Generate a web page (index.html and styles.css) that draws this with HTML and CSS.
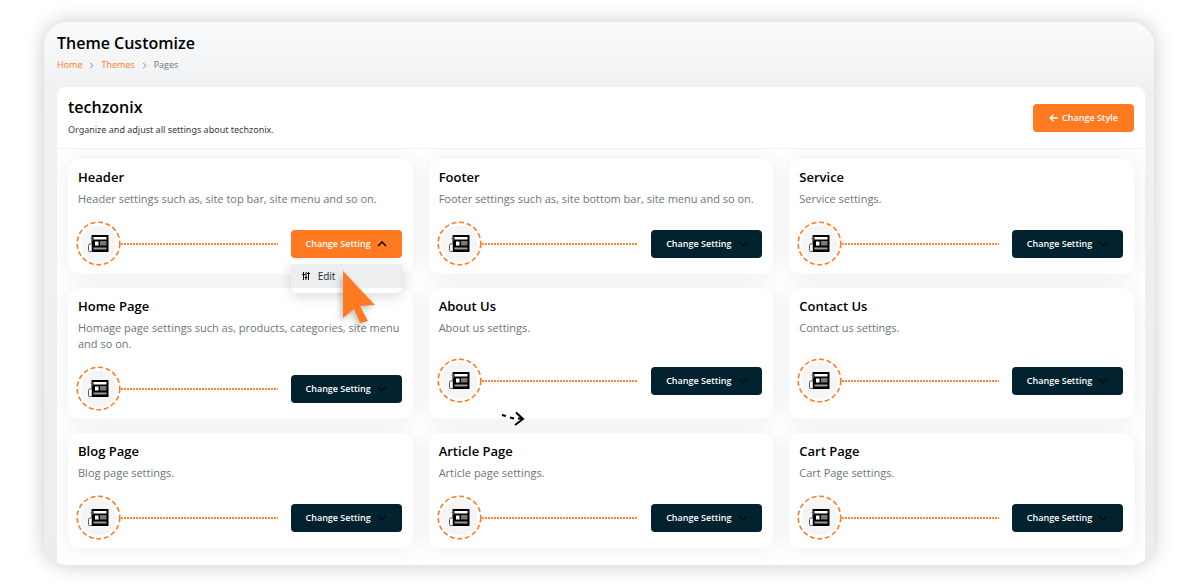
FILE: index.html
```html
<!DOCTYPE html>
<html lang="en">
<head>
    <meta charset="UTF-8">
    <meta name="viewport" content="width=device-width, initial-scale=1.0">
    <title>Theme Customize</title>
    <link rel="stylesheet" href="styles.css">
</head>
<body>
    <!-- Shared icons -->
    <svg class="sprite" aria-hidden="true">
        <symbol id="icon-news" viewBox="0 0 45 45">
            <circle cx="22.500" cy="22.500" r="18" fill="#f5f5f5"/>
            <circle cx="22.500" cy="22.500" r="21.300" fill="none" stroke="#ff7a21" stroke-width="1.600" stroke-dasharray="4.900 2.740"/>
            <g transform="translate(11.500 14)">
                <rect x="4" y="0" width="17" height="17" rx="0.500" fill="#000"/>
                <path d="M6 2h13v2.500H6zM7.500 6.500h3.500v4H7.500z" fill="#fff"/>
                <path d="M12.500 6h6.500v4.500h-6.500z" fill="#777"/>
                <path d="M6 12.500h13v2H6z" fill="#999"/>
                <path d="M4 9H2.500Q1 9 1 10.500v5Q1 16.500 2.500 16.500H4" fill="#fff" stroke="#444" stroke-width="0.900"/>
                <path d="M3 3.500h2M5 2v4" stroke="#555" stroke-width="0.800"/>
            </g>
        </symbol>
        <symbol id="icon-chevron" viewBox="0 0 10 8">
            <path d="M1 2l4 4 4-4" fill="none" stroke="currentColor" stroke-width="1.500"/>
        </symbol>
    </svg>

    <div class="window">
        <header class="page-header">
            <h1>Theme Customize</h1>
            <nav class="breadcrumb" aria-label="Breadcrumb">
                <a href="#">Home</a>
                <svg class="separator" viewBox="0 0 5 8"><path d="M1 1l3 3-3 3"/></svg>
                <a href="#">Themes</a>
                <svg class="separator" viewBox="0 0 5 8"><path d="M1 1l3 3-3 3"/></svg>
                <span>Pages</span>
            </nav>
        </header>

        <main class="panel">
            <div class="panel-header">
                <div>
                    <h2>techzonix</h2>
                    <p>Organize and adjust all settings about techzonix.</p>
                </div>
                <button class="btn btn-style" type="button">
                    <svg class="arrow" viewBox="0 0 9 8"><path d="M9 4H1.500M4.500 0.800L1.200 4l3.300 3.200"/></svg>
                    Change Style
                </button>
            </div>

            <div class="cards">
                <section class="card">
                    <h3>Header</h3>
                    <p>Header settings such as, site top bar, site menu and so on.</p>
                    <div class="card-action">
                        <svg class="badge"><use href="#icon-news"/></svg>
                        <span class="line"></span>
                        <div class="dropdown">
                            <button class="btn open" type="button" aria-expanded="true">Change Setting <svg class="chevron"><use href="#icon-chevron"/></svg></button>
                            <div class="menu">
                                <a href="#">
                                    <svg class="sliders" viewBox="0 0 8 8"><path d="M1.500 0v8M4 0v8M6.500 0v8M0 2.500h3M2.700 5.500h2.600M5 1.500h3"/></svg>
                                    Edit
                                </a>
                            </div>
                            <svg class="pointer" viewBox="0 0 34 52"><path d="M0 0l32 34-15 1 8 15-8 2-6-14-11 9z"/></svg>
                        </div>
                    </div>
                </section>

                <section class="card">
                    <h3>Footer</h3>
                    <p>Footer settings such as, site bottom bar, site menu and so on.</p>
                    <div class="card-action">
                        <svg class="badge"><use href="#icon-news"/></svg>
                        <span class="line"></span>
                        <button class="btn" type="button">Change Setting <svg class="chevron"><use href="#icon-chevron"/></svg></button>
                    </div>
                </section>

                <section class="card">
                    <h3>Service</h3>
                    <p>Service settings.</p>
                    <div class="card-action">
                        <svg class="badge"><use href="#icon-news"/></svg>
                        <span class="line"></span>
                        <button class="btn" type="button">Change Setting <svg class="chevron"><use href="#icon-chevron"/></svg></button>
                    </div>
                </section>

                <section class="card">
                    <h3>Home Page</h3>
                    <p>Homage page settings such as, products, categories, site menu and so on.</p>
                    <div class="card-action">
                        <svg class="badge"><use href="#icon-news"/></svg>
                        <span class="line"></span>
                        <button class="btn" type="button">Change Setting <svg class="chevron"><use href="#icon-chevron"/></svg></button>
                    </div>
                </section>

                <section class="card">
                    <h3>About Us</h3>
                    <p>About us settings.</p>
                    <div class="card-action">
                        <svg class="badge"><use href="#icon-news"/></svg>
                        <span class="line"></span>
                        <button class="btn" type="button">Change Setting <svg class="chevron"><use href="#icon-chevron"/></svg></button>
                    </div>
                    <svg class="dash-arrow" viewBox="0 0 24 16"><path d="M1 4l4 1M9 6.500l4 1M15 1.500l7 6.500-8 6M17 7.500h5"/></svg>
                </section>

                <section class="card">
                    <h3>Contact Us</h3>
                    <p>Contact us settings.</p>
                    <div class="card-action">
                        <svg class="badge"><use href="#icon-news"/></svg>
                        <span class="line"></span>
                        <button class="btn" type="button">Change Setting <svg class="chevron"><use href="#icon-chevron"/></svg></button>
                    </div>
                </section>

                <section class="card">
                    <h3>Blog Page</h3>
                    <p>Blog page settings.</p>
                    <div class="card-action">
                        <svg class="badge"><use href="#icon-news"/></svg>
                        <span class="line"></span>
                        <button class="btn" type="button">Change Setting <svg class="chevron"><use href="#icon-chevron"/></svg></button>
                    </div>
                </section>

                <section class="card">
                    <h3>Article Page</h3>
                    <p>Article page settings.</p>
                    <div class="card-action">
                        <svg class="badge"><use href="#icon-news"/></svg>
                        <span class="line"></span>
                        <button class="btn" type="button">Change Setting <svg class="chevron"><use href="#icon-chevron"/></svg></button>
                    </div>
                </section>

                <section class="card">
                    <h3>Cart Page</h3>
                    <p>Cart Page settings.</p>
                    <div class="card-action">
                        <svg class="badge"><use href="#icon-news"/></svg>
                        <span class="line"></span>
                        <button class="btn" type="button">Change Setting <svg class="chevron"><use href="#icon-chevron"/></svg></button>
                    </div>
                </section>
            </div>
        </main>
    </div>
</body>
</html>
```

FILE: styles.css
```css
* {
    margin: 0;
    padding: 0;
    box-sizing: border-box;
}

body {
    background-color: #fff;
    color: #000;
    font-family: 'Open Sans', 'Noto Sans', sans-serif;
    padding: 22px 46px 23px 44px;
}

a {
    color: #ff7a21;
    text-decoration: none;
}

h1, h2, h3 {
    font-weight: 600;
}

.sprite {
    position: absolute;
    width: 0;
    height: 0;
}

.window {
    background: linear-gradient(#fafbfd, #f0f1f3 66px, #ecedf0);
    border-radius: 24px;
    box-shadow: 0 0 20px rgba(0, 0, 0, 0.22);
    overflow: hidden;
    padding: 10px 9px 0 13px;
}

.page-header {
    height: 55px;
}

h1 {
    font-size: 16px;
    line-height: 22px;
}

.breadcrumb {
    display: flex;
    align-items: center;
    gap: 7px;
    margin-top: 3px;
    font-size: 9px;
    line-height: 16px;
    color: #6c757d;
}

.separator {
    width: 5px;
    height: 7px;
    fill: none;
    stroke: #6c757d;
}

.panel {
    background: #fff;
    border-radius: 8px 8px 0 0;
    overflow: hidden;
}

.panel-header {
    display: flex;
    align-items: center;
    justify-content: space-between;
    padding: 8px 11px;
    border-bottom: 1px solid #f3f3f3;
}

h2 {
    font-size: 16px;
    line-height: 24px;
}

.panel-header p {
    font-family: 'Noto Sans', sans-serif;
    font-size: 9px;
    line-height: 14px;
    margin-top: 4px;
    padding-bottom: 3px;
    color: #333b45;
}

.btn {
    display: flex;
    align-items: center;
    justify-content: center;
    gap: 6px;
    width: 111px;
    height: 28px;
    border: none;
    border-radius: 4px;
    background: #02222f;
    color: #fff;
    font-family: inherit;
    font-size: 9px;
    font-weight: 600;
    cursor: pointer;
}

.btn.open,
.btn-style {
    background: #ff7a21;
}

.btn-style {
    width: 101px;
    gap: 4px;
}

.arrow {
    width: 9px;
    height: 8px;
    fill: none;
    stroke: #fff;
    stroke-width: 1.4;
}

.chevron {
    width: 10px;
    height: 8px;
    color: #000c12;
}

.open .chevron {
    transform: rotate(180deg);
    color: #000;
}

.cards {
    display: grid;
    grid-template-columns: repeat(3, 1fr);
    gap: 14px 16px;
    padding: 10px 11px 14px;
    border-bottom: 3px solid #fff;
    overflow: hidden;
}

.card {
    position: relative;
    display: flex;
    flex-direction: column;
    padding: 9px 11px 8px 10px;
    background: #fff;
    border-radius: 12px;
    box-shadow: 0 0 24px rgba(0, 0, 0, 0.07);
}

h3 {
    font-size: 13px;
    line-height: 18px;
}

.card p {
    margin-top: 5px;
    font-size: 11px;
    line-height: 16px;
    color: #6c757d;
}

.card-action {
    display: flex;
    align-items: center;
    margin: auto 0;
    padding-top: 14px;
}

.badge {
    width: 45px;
    height: 45px;
    margin-left: -2px;
}

/* Dotted connector between the badge and the button */
.line {
    flex: 1;
    height: 2px;
    margin-right: 13px;
    background: repeating-linear-gradient(90deg, #ff8633 0 2px, transparent 2px 3px);
}

.dropdown {
    position: relative;
    z-index: 1;
}

.menu {
    position: absolute;
    top: 30px;
    left: 0;
    width: 100%;
    padding: 4px 0 5px;
    background: #fff;
    border-radius: 0 0 6px 6px;
    box-shadow: 0 4px 12px rgba(20, 20, 60, 0.14);
}

.menu a {
    display: flex;
    align-items: center;
    gap: 8px;
    height: 24px;
    padding-left: 11px;
    background: #edeef0;
    color: #212529;
    font-size: 10px;
}

.sliders {
    width: 8px;
    height: 8px;
    fill: none;
    stroke: #000;
}

.pointer {
    position: absolute;
    top: 41px;
    left: 52px;
    width: 34px;
    height: 52px;
    fill: #ff7a21;
    filter: drop-shadow(-2px 3px 3px rgba(0, 0, 0, 0.25));
}

.dash-arrow {
    position: absolute;
    left: 72px;
    bottom: -8px;
    width: 24px;
    height: 16px;
    fill: none;
    stroke: #000;
    stroke-width: 2;
}
```
